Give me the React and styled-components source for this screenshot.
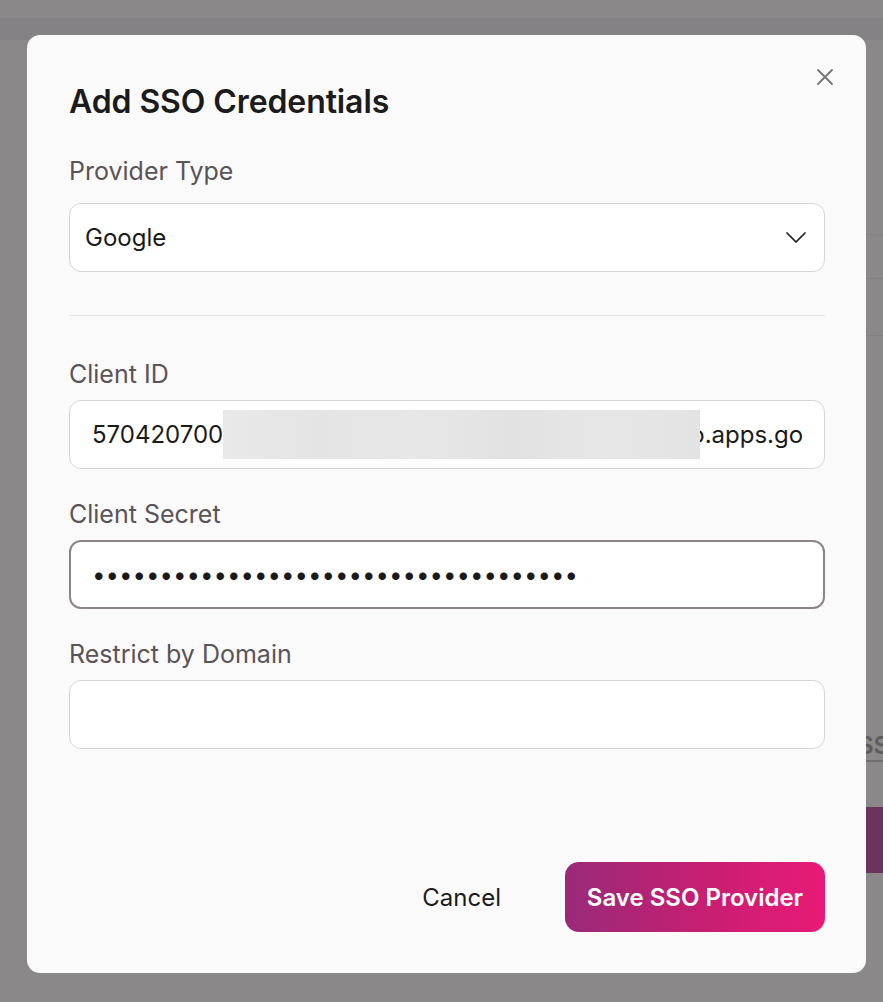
import React from "react"
import styled, { createGlobalStyle } from "styled-components"

const GlobalStyle = createGlobalStyle`
  * {
    box-sizing: border-box;
  }
  body {
    margin: 0;
    background: #8a8889;
    font-family: Inter, "Noto Sans", "Liberation Sans", sans-serif;
  }
`

const Page = styled.div`
  min-height: 1002px;
  background: #8a8889;
  overflow: hidden;
`

const PageHeader = styled.div`
  margin-top: 18px;
  height: 22px;
  background: #858285;
`

const PageMain = styled.div`
  padding-left: 600px;
  padding-top: 172px;
`

const PageRow = styled.div`
  height: ${props => props.h}px;
  border-bottom: 1px solid #828082;
`

const PageTab = styled.div`
  margin-top: 395px;
  padding-left: 258px;
  width: 400px;
  font-size: 24px;
  font-weight: 600;
  color: #5e5c5d;
  white-space: nowrap;
  border-bottom: 2px solid #6f6d6e;
`

const PageButton = styled.div`
  margin-top: 45px;
  width: 300px;
  height: 66px;
  border-radius: 12px;
  background: #6a345f;
`

const Overlay = styled.div`
  position: fixed;
  inset: 0;
  display: flex;
  justify-content: center;
  align-items: flex-start;
  padding: 35px 17px 0 27px;
`

const Modal = styled.div`
  position: relative;
  width: 839px;
  background: #fafafa;
  border-radius: 13px;
  padding: 49px 41px 41px 42px;
  display: flex;
  flex-direction: column;
`

const CloseButton = styled.button`
  position: absolute;
  top: 25px;
  right: 24px;
  width: 34px;
  height: 34px;
  padding: 0;
  border: none;
  background: transparent;
  display: flex;
  align-items: center;
  justify-content: center;
  cursor: pointer;
`

const Title = styled.h2`
  margin: 0;
  font-size: 32px;
  line-height: 36px;
  font-weight: 600;
  color: #1b1b1b;
  letter-spacing: -0.1px;
`

const Field = styled.div`
  margin-top: ${props => props.top}px;
  display: flex;
  flex-direction: column;
  gap: ${props => props.gap || 8}px;
`

const Label = styled.label`
  font-size: 25px;
  line-height: 36px;
  color: #5a5358;
`

const SelectBox = styled.div`
  height: 69px;
  border: 1px solid #d6d4d5;
  border-radius: 12px;
  background: #ffffff;
  display: flex;
  align-items: center;
  justify-content: space-between;
  padding: 0 17px 0 15px;
  font-size: 24px;
  color: #1a1a1a;
`

const Divider = styled.hr`
  margin: 43px 0 0;
  border: none;
  border-top: 1px solid #e6e4e5;
`

const TextInput = styled.input`
  height: 69px;
  width: 100%;
  border: ${props => (props.focused ? "2px solid #8c8588" : "1px solid #d6d4d5")};
  border-radius: 12px;
  background: #ffffff;
  padding: 0 ${props => (props.focused ? 21 : 22)}px;
  font-family: inherit;
  font-size: 24px;
  color: #1a1a1a;
  outline: none;
`

const ValueBox = styled.div`
  height: 69px;
  border: 1px solid #d6d4d5;
  border-radius: 12px;
  background: #ffffff;
  padding: 0 21px 0 22px;
  display: flex;
  align-items: center;
  font-size: 24px;
  color: #1a1a1a;
`

const ValueClip = styled.div`
  flex: 1;
  display: flex;
  align-items: center;
  overflow: hidden;
  white-space: nowrap;
`

const Redacted = styled.span`
  position: relative;
  z-index: 1;
  flex: none;
  width: 477px;
  height: 49px;
  background: linear-gradient(
    90deg,
    #e9e9e9 0%,
    #e4e4e4 20%,
    #e7e7e7 40%,
    #e2e2e2 60%,
    #e6e6e6 80%,
    #e3e3e3 100%
  );
`

const Tail = styled.span`
  margin-left: -10px;
`

const Footer = styled.div`
  margin-top: 113px;
  display: flex;
  justify-content: flex-end;
  align-items: center;
  gap: 32px;
`

const CancelButton = styled.button`
  height: 70px;
  padding: 0 32px;
  border: none;
  background: transparent;
  font-family: inherit;
  font-size: 24px;
  font-weight: 400;
  color: #1c1c1c;
  cursor: pointer;
`

const SaveButton = styled.button`
  height: 70px;
  width: 260px;
  border: none;
  border-radius: 14px;
  background: linear-gradient(90deg, #992a79 0%, #c41f72 50%, #e91a76 100%);
  font-family: inherit;
  font-size: 24px;
  font-weight: 600;
  color: #ffffff;
  cursor: pointer;
`

const CloseIcon = () => (
  <svg width="18" height="18" viewBox="0 0 18 18" fill="none">
    <path d="M2 2L16 16M16 2L2 16" stroke="#777577" strokeWidth="1.8" strokeLinecap="round" />
  </svg>
)

const Chevron = () => (
  <svg width="22" height="13" viewBox="0 0 22 13" fill="none">
    <path d="M2 2L11 11L20 2" stroke="#1f1f1f" strokeWidth="1.7" strokeLinecap="round" strokeLinejoin="round" />
  </svg>
)

const App = () => (
  <>
    <GlobalStyle />
    <Page>
      <PageHeader />
      <PageMain>
        <PageRow h={23} />
        <PageRow h={44} />
        <PageRow h={57} />
        <PageTab>SSO Settings</PageTab>
        <PageButton />
      </PageMain>
    </Page>
    <Overlay>
      <Modal>
        <CloseButton aria-label="Close">
          <CloseIcon />
        </CloseButton>
        <Title>Add SSO Credentials</Title>
        <Field top={33} gap={14}>
          <Label>Provider Type</Label>
          <SelectBox>
            <span>Google</span>
            <Chevron />
          </SelectBox>
        </Field>
        <Divider />
        <Field top={40}>
          <Label>Client ID</Label>
          <ValueBox>
            <ValueClip>
              <span>570420700</span>
              <Redacted />
              <Tail>o.apps.googleusercontent.com</Tail>
            </ValueClip>
          </ValueBox>
        </Field>
        <Field top={27}>
          <Label>Client Secret</Label>
          <TextInput focused type="password" readOnly value={"x".repeat(36)} />
        </Field>
        <Field top={27}>
          <Label>Restrict by Domain</Label>
          <TextInput type="text" readOnly value="" />
        </Field>
        <Footer>
          <CancelButton>Cancel</CancelButton>
          <SaveButton>Save SSO Provider</SaveButton>
        </Footer>
      </Modal>
    </Overlay>
  </>
)

export default App
